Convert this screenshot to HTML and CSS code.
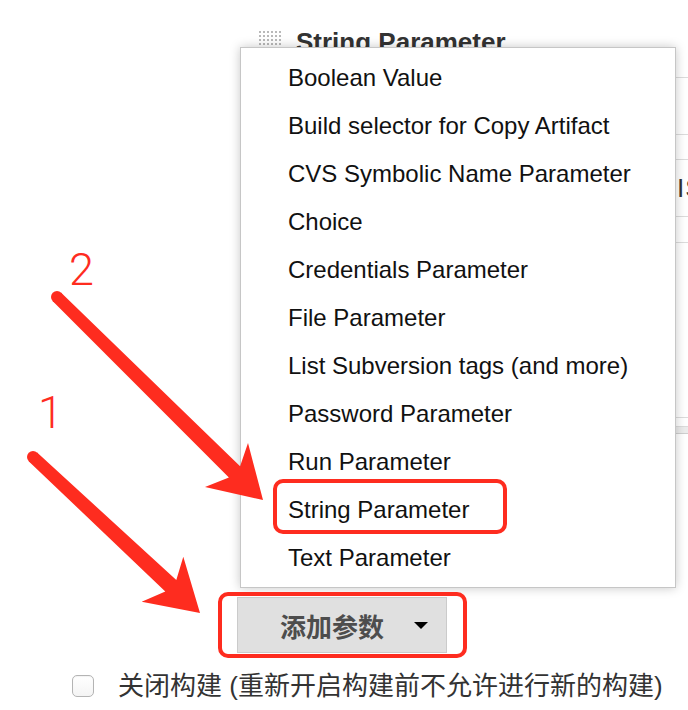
FILE: index.html
```html
<!DOCTYPE html>
<html lang="zh">
<head>
<meta charset="utf-8">
<title>Jenkins parameter menu</title>
<link rel="stylesheet" href="styles.css">
</head>
<body>
<div class="page">
  <div class="param">
    <div class="param-head">
      <span class="handle"></span>
      <span class="title">String Parameter</span>
    </div>
    <div class="fields">
      <div class="row r-a"></div>
      <div class="row r-b"></div>
      <div class="row r-c"></div>
      <div class="row r-d"><span class="field-text">IS</span></div>
      <div class="row r-e"></div>
      <div class="row r-f"></div>
      <div class="row r-g"></div>
      <div class="band"></div>
    </div>
  </div>

  <div class="add-row">
    <button class="add-btn" type="button"><span class="add-label">添加参数</span><span class="caret"></span></button>
  </div>

  <div class="check-row">
    <span class="checkbox"></span>
    <span class="check-label">关闭构建 (重新开启构建前不允许进行新的构建)</span>
  </div>

  <ul class="menu">
    <li>Boolean Value</li>
    <li>Build selector for Copy Artifact</li>
    <li>CVS Symbolic Name Parameter</li>
    <li>Choice</li>
    <li>Credentials Parameter</li>
    <li>File Parameter</li>
    <li>List Subversion tags (and more)</li>
    <li>Password Parameter</li>
    <li>Run Parameter</li>
    <li>String Parameter</li>
    <li>Text Parameter</li>
  </ul>

  <svg class="annot" width="688" height="710" viewBox="0 0 688 710" xmlns="http://www.w3.org/2000/svg">
    <g fill="#fe2c1f">
      <circle cx="57" cy="297" r="6"/>
      <polygon points="61.2,292.7 240.1,466.2 248,443 263,500 205,487 228.9,477.6 52.8,301.3"/>
      <circle cx="33" cy="457" r="6"/>
      <polygon points="37.1,452.6 176.3,579.9 183.3,556.7 200,613 141.7,601.7 165.3,591.5 28.9,461.4"/>
      <text class="num" x="69" y="285">2</text>
      <text class="num" x="38" y="428">1</text>
    </g>
    <g fill="none" stroke="#fe2c1f" stroke-width="4">
      <rect x="275" y="481" width="230" height="51" rx="8"/>
      <rect x="220" y="594" width="245" height="62" rx="8"/>
    </g>
  </svg>
</div>
</body>
</html>
```
FILE: styles.css
```css
* { box-sizing: border-box; }

html, body {
  margin: 0;
  padding: 0;
  background: #fff;
}

body {
  font-family: "Liberation Sans", "Noto Sans CJK SC", sans-serif;
  color: #333;
}

.page {
  position: relative;
  width: 688px;
  height: 710px;
  overflow: hidden;
}

/* underlying parameter block */
.param {
  height: 597px;
  padding: 27px 0 0 258px;
  overflow: hidden;
}

.param-head {
  display: flex;
  align-items: flex-start;
  gap: 14px;
  height: 27px;
}

.handle {
  margin-top: 3px;
  width: 24px;
  height: 17px;
  background-image: radial-gradient(circle, #b9b9b9 1px, transparent 1.4px);
  background-size: 4px 4px;
}

.title {
  font-size: 26px;
  font-weight: bold;
  color: #333;
  line-height: 30px;
  white-space: nowrap;
}

.fields {
  margin-left: 40px;
}

.row {
  border-bottom: 1px solid #dcdcdc;
}

.r-a { height: 24px; }
.r-b { height: 57px; }
.r-c { height: 25px; }
.r-d {
  height: 57px;
  display: flex;
  align-items: center;
  padding-left: 379px;
}
.r-e { height: 26px; }
.r-f { height: 175px; }
.r-g { height: 9px; }

.band {
  height: 7px;
  background: #ececec;
  border-bottom: 1px solid #cfcfcf;
}

.field-text {
  font-size: 26px;
  color: #333;
  letter-spacing: 1px;
}

/* add button */
.add-row {
  padding-left: 237px;
}

.add-btn {
  display: flex;
  align-items: center;
  width: 210px;
  height: 56px;
  padding: 0 0 0 42px;
  margin: 0;
  background: #e0e0e0;
  border: 1px solid #cbcbcb;
  border-radius: 0;
  font-family: "Liberation Sans", "Noto Sans CJK SC", sans-serif;
  cursor: pointer;
}

.add-label {
  font-size: 26px;
  font-weight: bold;
  color: #4d4d4d;
}

.caret {
  margin-left: 30px;
  width: 0;
  height: 0;
  border-left: 7px solid transparent;
  border-right: 7px solid transparent;
  border-top: 7px solid #000;
}

/* checkbox row */
.check-row {
  display: flex;
  align-items: center;
  gap: 24px;
  margin-top: 18px;
  padding-left: 72px;
  height: 30px;
}

.checkbox {
  width: 22px;
  height: 22px;
  border: 1px solid #b4b4b4;
  border-radius: 5px;
  background: linear-gradient(#fff, #f4f4f4);
  box-shadow: inset 0 1px 1px rgba(0,0,0,0.05);
}

.check-label {
  font-size: 26px;
  line-height: 30px;
  color: #333;
  white-space: nowrap;
}

/* dropdown menu overlay */
.menu {
  position: absolute;
  left: 240px;
  top: 47px;
  width: 436px;
  height: 541px;
  margin: 0;
  padding: 6px 0;
  list-style: none;
  background: #fff;
  border: 1px solid #c6c6c6;
  box-shadow: 0 0 10px rgba(0, 0, 0, 0.22);
}

.menu li {
  height: 48px;
  line-height: 48px;
  padding-left: 47px;
  font-size: 24px;
  color: #111;
  white-space: nowrap;
}

/* annotation overlay */
.annot {
  position: absolute;
  left: 0;
  top: 0;
  pointer-events: none;
}

.num {
  font-family: Roboto, "Liberation Sans", sans-serif;
  font-weight: 300;
  font-size: 45px;
}
```
